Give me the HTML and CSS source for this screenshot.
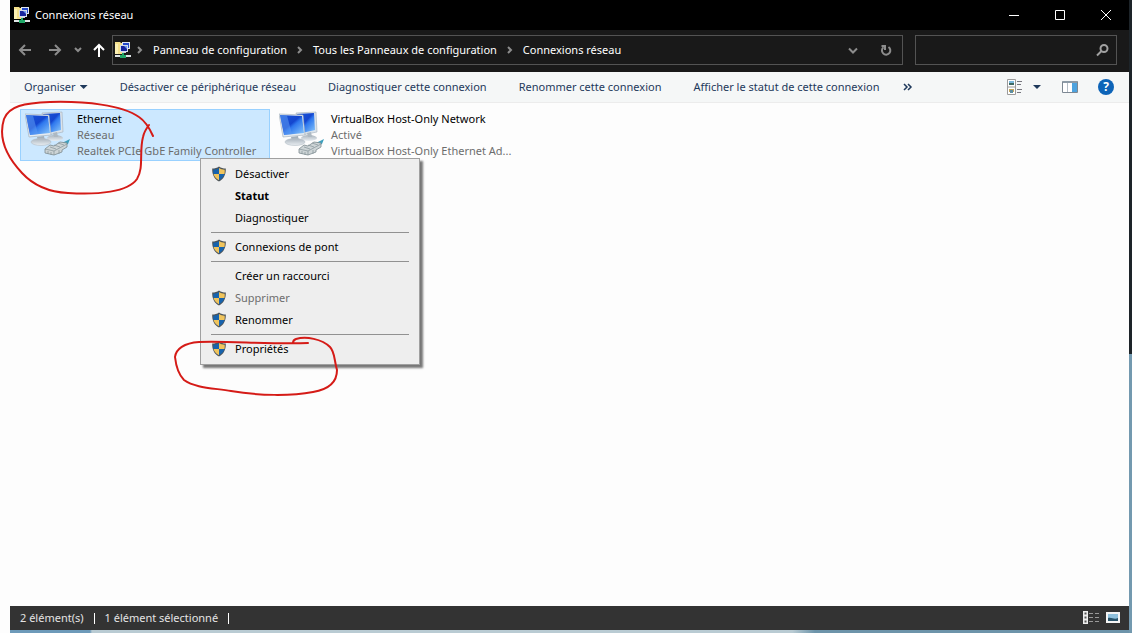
FILE: index.html
```html
<!DOCTYPE html>
<html lang="fr">
<head>
<meta charset="utf-8">
<title>Connexions réseau</title>
<link rel="stylesheet" href="styles.css">
</head>
<body>
<svg class="defs" aria-hidden="true">
  <defs>
    <linearGradient id="screen" x1="0" y1="0" x2="1" y2="1">
      <stop offset="0" stop-color="#1b55d8"/><stop offset=".45" stop-color="#1446cf"/><stop offset=".55" stop-color="#2f78ee"/><stop offset="1" stop-color="#8ccafb"/>
    </linearGradient>
    <linearGradient id="base" x1="0" y1="0" x2="0" y2="1">
      <stop offset="0" stop-color="#aab4bd"/><stop offset="1" stop-color="#e9eef2"/>
    </linearGradient>
  </defs>
  <symbol id="i-net" viewBox="0 0 16 16">
    <path d="M0 0h5l1 1h3v11H0z" fill="#f4e08b"/>
    <path d="M0 2h3v10H0z" fill="#fbf0b4"/>
    <path d="M7 0h8v7H7z" fill="#dfe6ee"/><path d="M8 1h6v5H8z" fill="#2348c8"/>
    <path d="M5 3h8v7H5z" fill="#d3dcea"/><path d="M6 4h6v5H6z" fill="#16249c"/><path d="M9 4h3v3z" fill="#6f9cf0"/>
    <path d="M7 10h4v1H7z" fill="#cfd6dc"/>
    <path d="M7 11h2v2h2v3H5v-3h2z" fill="#1fa767"/>
    <path d="M0 13h5v2H0zM11 13h5v2h-5z" fill="#dfe5e6"/>
  </symbol>
  <symbol id="i-shield" viewBox="0 0 16 16">
    <path d="M8 .5c2 1.400 4.200 2 6.800 2.100C15 8.600 12.800 13.200 8 15.500 3.200 13.200 1 8.600 1.200 2.600 3.800 2.500 6 1.900 8 .5z" fill="#4d5459"/>
    <path d="M8 1.900v6.100H2.500C2.200 6.600 2.200 5 2.300 3.700 4.500 3.500 6.300 3 8 1.900z" fill="#1763ad"/>
    <path d="M8 1.900v6.100h5.500c.3-1.400.3-3 .2-4.300C11.500 3.500 9.700 3 8 1.900z" fill="#f0c45c"/>
    <path d="M8 8v6.200C5 12.700 3.200 10.600 2.500 8z" fill="#f0c45c"/>
    <path d="M8 8v6.200c3-1.500 4.800-3.600 5.500-6.200z" fill="#1763ad"/>
  </symbol>
  <symbol id="i-adapter" viewBox="0 0 48 48">
    <path d="M17 2l20-1 1 20-15 3z" fill="#dbe3ea" stroke="#a3afba" stroke-width=".6"/>
    <path d="M18 3l17-1 1 17-13 3z" fill="url(#screen)"/>
    <ellipse cx="30" cy="27" rx="8" ry="3" fill="url(#base)"/>
    <path d="M28 22l4-1 1 5h-4z" fill="#aeb9c2"/>
    <path d="M0 3l24 1 2 20-22 2z" fill="#e6ecf1" stroke="#9eabb7" stroke-width=".6"/>
    <path d="M1 4l22 1 2 17-20 2z" fill="url(#screen)"/>
    <path d="M1 4l7 .4L13 23l-8 1z" fill="#5c9bf3" opacity=".55"/>
    <path d="M12 26l7-1 1 5h-7z" fill="#a4b0ba"/>
    <ellipse cx="16" cy="31" rx="10" ry="3.500" fill="url(#base)" stroke="#b4bec6" stroke-width=".6"/>
    <path d="M37 32l8-4-2 5-5 2z" fill="#3d9fbd"/>
    <path d="M20 38l5-4 4 1 6-4 7 1v4l-5 3v2l-8 3-9-2z" fill="#cdd4d6" stroke="#7d8b91" stroke-width=".8"/>
    <path d="M20 38l9 2 13-7M29 40v4M25 36l6 2M29 34l6 2M33 32l6 2M23 40v3M26 41v3M34 39v4" fill="none" stroke="#859399" stroke-width=".7"/>
  </symbol>
</svg>

<div class="desktop">
  <main class="window">
    <header class="titlebar">
      <svg class="icon16"><use href="#i-net"/></svg>
      <h1 class="title">Connexions réseau</h1>
      <div class="caption">
        <button class="cap" aria-label="Réduire"><svg viewBox="0 0 12 12"><path d="M1 6.500h10"/></svg></button>
        <button class="cap" aria-label="Agrandir"><svg viewBox="0 0 12 12"><path d="M1.500 1.500h9v9h-9z"/></svg></button>
        <button class="cap" aria-label="Fermer"><svg viewBox="0 0 12 12"><path d="M1 1l10 10M11 1L1 11"/></svg></button>
      </div>
    </header>

    <div class="navbar">
      <div class="arrows">
        <button class="nav" aria-label="Précédent"><svg viewBox="0 0 16 16"><path d="M14 8H3M8 3L3 8l5 5"/></svg></button>
        <button class="nav" aria-label="Suivant"><svg viewBox="0 0 16 16"><path d="M2 8h11M8 3l5 5-5 5"/></svg></button>
        <button class="nav nav-small" aria-label="Emplacements récents"><svg viewBox="0 0 16 16"><path d="M5 6l3 3 3-3"/></svg></button>
        <button class="nav nav-up" aria-label="Remonter"><svg viewBox="0 0 16 16"><path d="M8 15V3M3 8l5-5 5 5"/></svg></button>
      </div>
      <nav class="address">
        <svg class="icon16"><use href="#i-net"/></svg>
        <svg class="sep" viewBox="0 0 8 8"><path d="M2 1l3 3-3 3"/></svg>
        <a href="#">Panneau de configuration</a>
        <svg class="sep" viewBox="0 0 8 8"><path d="M2 1l3 3-3 3"/></svg>
        <a href="#">Tous les Panneaux de configuration</a>
        <svg class="sep" viewBox="0 0 8 8"><path d="M2 1l3 3-3 3"/></svg>
        <a href="#">Connexions réseau</a>
        <button class="nav history" aria-label="Adresses précédentes"><svg viewBox="0 0 16 16"><path d="M4 6.500l4 4 4-4"/></svg></button>
        <button class="nav refresh" aria-label="Actualiser"><svg viewBox="0 0 16 16"><path d="M10.500 5A4.200 4.200 0 1 1 5.500 5.200M3.500 4H7v4"/></svg></button>
      </nav>
      <label class="search">
        <input type="search" aria-label="Rechercher">
        <svg viewBox="0 0 16 16"><circle cx="10" cy="6.500" r="3.500"/><path d="M7.500 9L3 13.500"/></svg>
      </label>
    </div>

    <div class="toolbar">
      <button class="cmd">Organiser<span class="caret"></span></button>
      <button class="cmd">Désactiver ce périphérique réseau</button>
      <button class="cmd">Diagnostiquer cette connexion</button>
      <button class="cmd">Renommer cette connexion</button>
      <button class="cmd">Afficher le statut de cette connexion</button>
      <button class="cmd more" aria-label="Plus de commandes"><svg viewBox="0 0 10 8"><path d="M1 1l3 3-3 3M5 1l3 3-3 3"/></svg></button>
      <div class="views">
        <button class="tool" aria-label="Changer l'affichage">
          <svg viewBox="0 0 16 16"><path d="M.5.500h8v15h-8zM.5 8h8" fill="#fff" stroke="#9b9b9b"/><path d="M2 2h5v2H2z" fill="#7bb8dc"/><path d="M2 4h5v2H2z" fill="#3f6a63"/><path d="M2 10h5v3H2z" fill="#c5a65b"/><path d="M3 11h3v3H3z" fill="#5d8ea0"/><path d="M10 2.500h5M10 5.500h4M10 10.500h5M10 13.500h4" stroke="#77777f"/></svg>
        </button>
        <button class="tool tool-caret" aria-label="Autres options"><span class="caret"></span></button>
        <button class="tool preview" aria-label="Volet de visualisation">
          <svg viewBox="0 0 16 16"><path d="M.5 2.500h15v11H.5z" fill="#fff" stroke="#7d8893"/><path d="M1 2h14v2H1z" fill="#8c9aa6"/><path d="M10 4h5v9h-5z" fill="#4da3df"/><path d="M5.500 4v9" stroke="#b5bec6"/></svg>
        </button>
        <button class="help" aria-label="Aide">?</button>
      </div>
    </div>

    <section class="content">
      <ul class="list">
        <li class="item selected">
          <svg class="adapter"><use href="#i-adapter"/></svg>
          <div class="info"><p class="name">Ethernet</p><p>Réseau</p><p>Realtek PCIe GbE Family Controller</p></div>
        </li>
        <li class="item">
          <svg class="adapter"><use href="#i-adapter"/></svg>
          <div class="info"><p class="name">VirtualBox Host-Only Network</p><p>Activé</p><p>VirtualBox Host-Only Ethernet Ad...</p></div>
        </li>
      </ul>
      <div class="menu" role="menu">
        <button role="menuitem"><svg class="shield"><use href="#i-shield"/></svg>Désactiver</button>
        <button role="menuitem" class="default">Statut</button>
        <button role="menuitem">Diagnostiquer</button>
        <hr>
        <button role="menuitem"><svg class="shield"><use href="#i-shield"/></svg>Connexions de pont</button>
        <hr>
        <button role="menuitem">Créer un raccourci</button>
        <button role="menuitem" disabled><svg class="shield"><use href="#i-shield"/></svg>Supprimer</button>
        <button role="menuitem"><svg class="shield"><use href="#i-shield"/></svg>Renommer</button>
        <hr>
        <button role="menuitem"><svg class="shield"><use href="#i-shield"/></svg>Propriétés</button>
      </div>
    </section>

    <footer class="status">
      <span>2 élément(s)</span><i></i><span>1 élément sélectionné</span><i></i>
      <div class="modes">
        <button aria-label="Détails"><svg viewBox="0 0 16 14"><path d="M0 0h5v13H0z" fill="#eee"/><path d="M1.500 1.500h2v2h-2zM1.500 5.500h2v2h-2zM1.500 9.500h2v2h-2z" fill="#555"/><path d="M6 2.500h4M12 2.500h4M6 6.500h4M12 6.500h4M6 10.500h4M12 10.500h4" stroke="#999"/></svg></button>
        <button aria-label="Grandes icônes"><svg viewBox="0 0 16 14"><path d="M1 1h14v11H1z" fill="#f4f4f4"/><path d="M3 3h10v7H3z" fill="#8fc0dc"/><path d="M3 7c4-1 6 2 10 0v3H3z" fill="#28536a"/></svg></button>
      </div>
    </footer>
  </main>

  <svg class="marks" viewBox="0 0 360 400" aria-hidden="true">
    <path d="M153 136C149 127 145 121 139 117C122 105 85 101 50 102C24 103 9 106 4 119C-2 138 6 156 22 173C34 186 48 192 68 193C98 195 128 192 137 179C144 168 139 152 143 137C144 132 146 129 149 125"/>
    <path d="M308 343C265 344 229 341 199 342C184 343 176 349 175 357C176 366 178 374 184 380C195 388 213 388 231 391C259 396 292 396 313 392C331 389 337 380 337 370C334 360 335 352 330 347C322 339 306 336 296 339C293 340 293 342 293 343"/>
  </svg>
</div>
</body>
</html>
```
FILE: styles.css
```css
* { box-sizing: border-box; }
body {
  margin: 0;
  background: #fdfdfd;
  color: #000;
  font: 11px/16px "Noto Sans", "Open Sans", sans-serif;
}
button {
  display: flex;
  align-items: center;
  padding: 0;
  border: 0;
  background: none;
  color: inherit;
  font: inherit;
  white-space: nowrap;
}
h1, p, ul { margin: 0; padding: 0; font-weight: 400; }
a { color: inherit; text-decoration: none; }
svg { display: block; flex: none; }
.defs { position: absolute; width: 0; height: 0; }

.desktop {
  position: relative;
  min-height: 100vh;
  display: flex;
  padding: 0 0 3px 10px;
  background:
    linear-gradient(#1d2429, #1d2429) right top / 3px 56% no-repeat,
    linear-gradient(#7399af, #7399af) right bottom / 3px 44% no-repeat,
    linear-gradient(90deg, #fdfdfd 10px, #6d9ab9 10px, #6d9ab9 90px, #b9cbd3 92px, #b9cbd3 70%, #6d94aa 72%) bottom / 100% 3px no-repeat;
}
.window {
  flex: 1;
  min-width: 0;
  display: flex;
  flex-direction: column;
  margin-right: 3px;
}
.icon16 { width: 16px; height: 16px; }

.titlebar {
  display: flex;
  align-items: center;
  height: 30px;
  padding-left: 4px;
  gap: 5px;
  background: #000;
  color: #fff;
}
.title { font-size: 11px; }
.caption { display: flex; margin-left: auto; }
.cap { width: 46px; height: 30px; justify-content: center; }
.cap svg { width: 12px; height: 12px; fill: none; stroke: #fff; stroke-width: 1; }

.navbar {
  display: flex;
  align-items: center;
  height: 42px;
  padding: 0 12px 2px 7px;
  background: #191919;
  color: #fff;
}
.arrows { display: flex; align-items: center; width: 95px; gap: 14px; }
.nav svg { width: 16px; height: 16px; fill: none; stroke: #8c8c8c; stroke-width: 2; }
.nav-small { margin: 0 -9px 0 -7px; }
.nav.nav-up svg { stroke: #fff; }
.address {
  flex: 1;
  display: flex;
  align-items: center;
  gap: 9px;
  height: 30px;
  padding: 0 8px 0 2px;
  border: 1px solid #535353;
  white-space: nowrap;
}
.sep { width: 8px; height: 8px; fill: none; stroke: #8c8c8c; stroke-width: 2; }
.icon16 + .sep { margin-left: -4px; }
.history { margin-left: auto; }
.refresh { margin-left: 8px; }
.search {
  display: flex;
  align-items: center;
  width: 202px;
  height: 30px;
  margin-left: 12px;
  padding-right: 6px;
  border: 1px solid #535353;
}
.search input {
  flex: 1;
  min-width: 0;
  height: 26px;
  border: 0;
  outline: 0;
  background: transparent;
  color: #fff;
  font: inherit;
}
.search svg { width: 16px; height: 16px; fill: none; stroke: #a0a0a0; stroke-width: 2; }

.toolbar {
  display: flex;
  align-items: center;
  gap: 32px;
  height: 31px;
  padding: 0 15px 0 14px;
  border-bottom: 1px solid #ececec;
  background: #f5f7f7;
  color: #1e395b;
}
.caret {
  width: 8px;
  height: 4px;
  margin-left: 4px;
  background: #1e395b;
  clip-path: polygon(0 0, 100% 0, 50% 100%);
}
.more { margin-left: -8px; }
.more svg { width: 10px; height: 8px; fill: none; stroke: #1e395b; stroke-width: 1.5; }
.views { display: flex; align-items: center; margin-left: auto; }
.tool svg { width: 16px; height: 16px; }
.tool-caret { margin: 0 21px 0 6px; }
.help {
  justify-content: center;
  width: 16px;
  height: 16px;
  margin-left: 20px;
  border-radius: 50%;
  background: #0d64b8;
  color: #fff;
  font-size: 12px;
  font-weight: 700;
}

.content { position: relative; flex: 1; background: #fdfdfd; }
.list { display: flex; gap: 4px; padding: 6px 10px; list-style: none; }
.item {
  display: flex;
  width: 250px;
  height: 52px;
  gap: 4px;
  padding: 1px 4px;
  border: 1px solid transparent;
  color: #6d6d6d;
  white-space: nowrap;
}
.selected { border-color: #99d1ff; background: #cce8ff; }
.adapter { width: 48px; height: 48px; }
.name { color: #000; }

.menu {
  position: absolute;
  left: 190px;
  top: 55px;
  width: 220px;
  padding: 4px 2px;
  border: 1px solid #a0a0a0;
  background: #eee;
  box-shadow: 3px 3px 2px #777;
}
.menu button { position: relative; width: 100%; height: 22px; padding-left: 32px; }
.menu .default { font-weight: 700; }
.menu button:disabled { color: #6d6d6d; }
.shield { position: absolute; left: 8px; top: 3px; width: 16px; height: 16px; }
.menu hr { height: 1px; margin: 3px 8px; border: 0; background: #919191; }

.status {
  display: flex;
  align-items: center;
  gap: 10px;
  height: 24px;
  padding: 0 8px 0 10px;
  background: #333;
  color: #e4e4e4;
}
.status i { width: 1px; height: 11px; background: #fff; }
.modes { display: flex; gap: 6px; margin-left: auto; }
.modes svg { width: 16px; height: 14px; }

.marks {
  position: absolute;
  left: 0;
  top: 0;
  width: 360px;
  height: 400px;
  fill: none;
  stroke: #d51b17;
  stroke-width: 2;
  stroke-linecap: round;
  pointer-events: none;
}
```
